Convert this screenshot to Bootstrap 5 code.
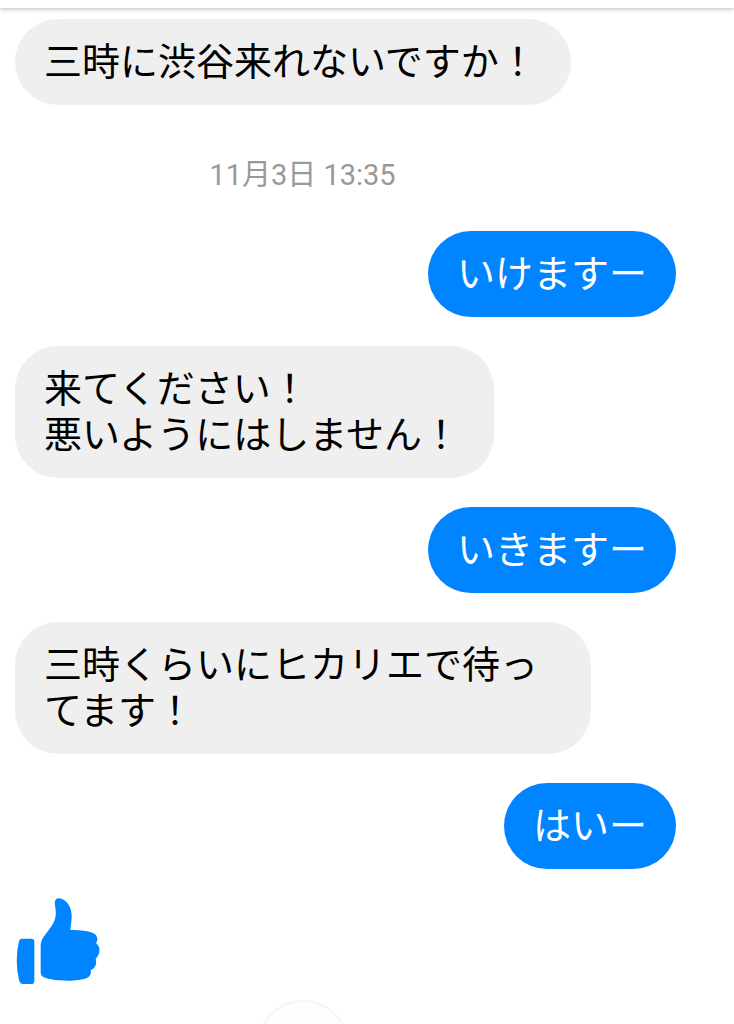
<!DOCTYPE html>
<html lang="ja">
<head>
<meta charset="utf-8">
<meta name="viewport" content="width=device-width, initial-scale=1">
<title>チャット</title>
<link href="https://cdn.jsdelivr.net/npm/bootstrap@5.3.0/dist/css/bootstrap.min.css" rel="stylesheet">
<style>
body{background:#fff;color:#000;font-family:Roboto,"Noto Sans CJK JP",sans-serif}
.topbar{height:8px;background:#fff;box-shadow:0 1px 5px rgba(0,0,0,.28)}
.chat{padding:11px 58px 0 15px;height:calc(100vh - 8px)}
.bubble{padding:20px 29px;border-radius:43px;font-size:38px;line-height:46px;max-width:576px}
.them{background:#efefef;padding-right:34px}
.me{background:#0084ff;color:#fff}
.gap{margin-bottom:29px}
.stamp{color:#999;font-size:29px;line-height:34px;margin:53px 0 39px;padding-right:86px}
.like{width:86px;height:88px;color:#0084ff}
.more{width:92px;height:92px;border:2px solid #f5f5f5;background:#fdfdfd;margin:14px 86px 0 0}
</style>
</head>
<body>
<header class="topbar"></header>
<main class="chat d-flex flex-column align-items-start overflow-hidden">
<div class="bubble them">三時に渋谷来れないですか！</div>
<time class="stamp align-self-center">11月3日 13:35</time>
<div class="bubble me gap align-self-end">いけますー</div>
<div class="bubble them gap">来てください！<br>悪いようにはしません！</div>
<div class="bubble me gap align-self-end">いきますー</div>
<div class="bubble them gap">三時くらいにヒカリエで待ってます！</div>
<div class="bubble me gap align-self-end">はいー</div>
<svg class="like flex-shrink-0" viewBox="45 51 258 264" fill="currentColor" role="img" aria-label="いいね！">
<path d="M65 173H94Q103 173 103 182V299Q103 309 94 309H67Q61 309 58 301Q43 240 57 180Q59 173 65 173Z"/>
<path d="M165 61C167 50 177 50 187 54C204 62 215 83 215 105C215 121 212 134 211 147C236 146 260 149 277 155C291 160 297 174 288 187C298 193 301 208 296 219C294 226 290 230 287 234C291 246 288 260 272 268C275 281 268 290 252 294C216 303 158 300 131 289C125 286 122 281 122 274V195C122 173 137 161 150 142C165 121 169 106 167 87C166 76 163 68 165 61Z"/>
</svg>
<button type="button" class="more rounded-circle flex-shrink-0 align-self-center" aria-label="最新のメッセージへ"></button>
</main>
<script src="https://cdn.jsdelivr.net/npm/bootstrap@5.3.0/dist/js/bootstrap.bundle.min.js"></script>
</body>
</html>
